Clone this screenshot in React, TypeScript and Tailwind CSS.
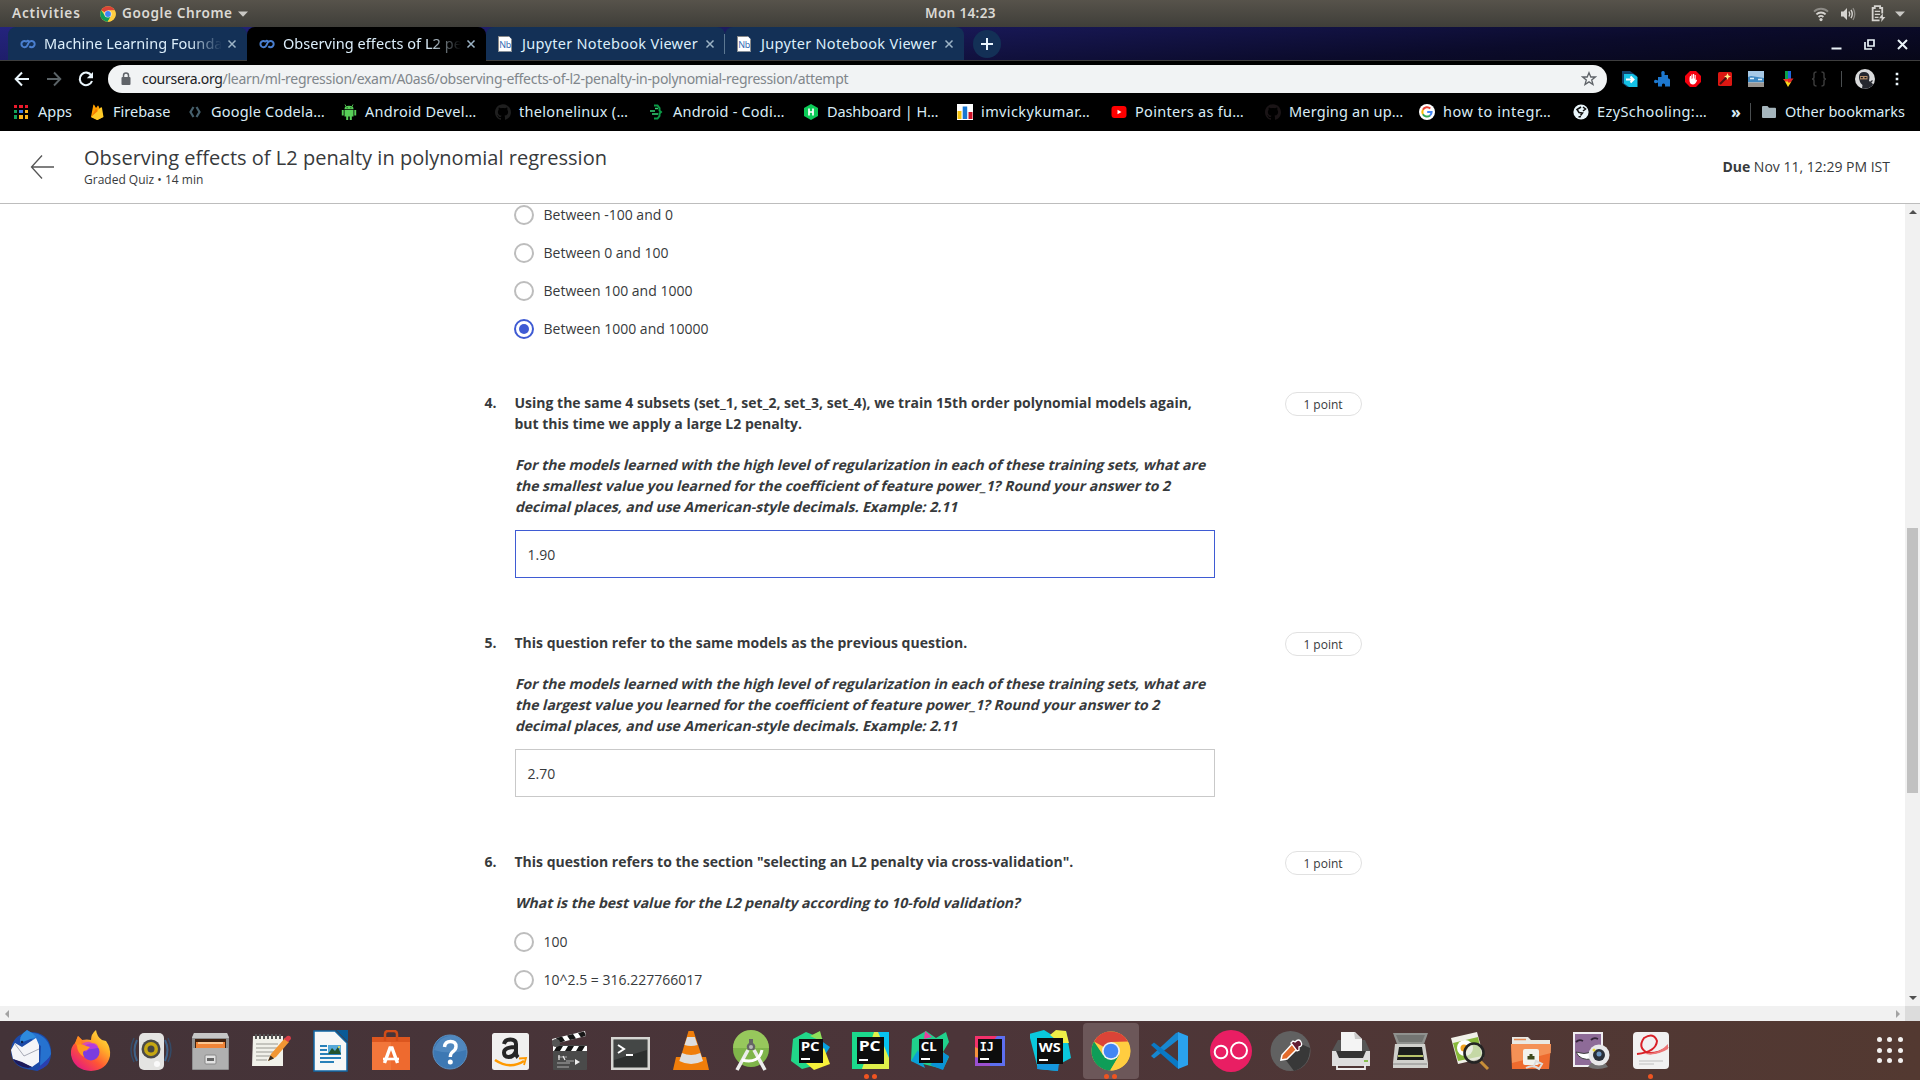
import React, { type ReactNode } from "react";
import { SiGithub } from "react-icons/si";

const Svg = ({ s = 16, vb = "0 0 16 16", children, className = "" }: { s?: number; vb?: string; children: ReactNode; className?: string }) => (
  <svg width={s} height={s} viewBox={vb} className={"shrink-0 " + className} fill="none">
    {children}
  </svg>
);

function ChromeLogo({ s = 16 }: { s?: number }) {
  return (
    <Svg s={s} vb="0 0 40 40">
      <circle cx="20" cy="20" r="19.5" fill="#ffcd40" />
      <path d="M20 20L3 10.4A19.5 19.5 0 0 1 37 10.5L20 11Z" fill="#db4437" />
      <path d="M3 10.4A19.5 19.5 0 0 0 19 39.5L28 24.5L20 20L12 24Z" fill="#0f9d58" />
      <path d="M37 11H20L28 24.5L19.5 39.5A19.5 19.5 0 0 0 37 11Z" fill="#ffcd40" />
      <circle cx="20" cy="20" r="9" fill="#f1f1f1" />
      <circle cx="20" cy="20" r="7.3" fill="#4285f4" />
    </Svg>
  );
}

const Caret = () => (
  <Svg s={10} vb="0 0 10 10"><path d="M0 2.5H10L5 7.8Z" fill="#c9c8c4" /></Svg>
);

function TopBar() {
  return (
    <div className="relative flex h-[27px] items-center bg-gradient-to-b from-[#57534b] to-[#3f3e39] text-[13.6px] font-semibold text-[#dbd9d4]">
      <span className="ml-[12px] w-[88px] tracking-[0.8px]">Activities</span>
      <ChromeLogo />
      <span className="ml-[6px] w-[116px] whitespace-nowrap tracking-[0.6px]">Google Chrome</span>
      <Caret />
      <span className="absolute left-[925px] w-[76px] whitespace-nowrap tracking-[0.3px]">Mon 14:23</span>
      <div className="mr-[15px] ml-auto flex items-center">
        <Svg s={16}>
          <path d="M1 5.6A10 10 0 0 1 15 5.6" stroke="#8d8b86" strokeWidth="1.8" />
          <path d="M3.4 8.4A6.5 6.5 0 0 1 12.6 8.4M5.6 11A3.5 3.5 0 0 1 10.4 11" stroke="#d5d3cf" strokeWidth="1.8" />
          <circle cx="8" cy="13.6" r="1.6" fill="#d5d3cf" />
        </Svg>
        <Svg s={16} className="ml-[11px]">
          <path d="M1 5.5H3.5L7 2V14L3.5 10.5H1Z" fill="#d5d3cf" />
          <path d="M9 5.5Q10.5 8 9 10.5M11 3.8Q13.5 8 11 12.2" stroke="#d5d3cf" strokeWidth="1.4" />
          <path d="M13 2.2Q16.5 8 13 13.8" stroke="#8d8b86" strokeWidth="1.3" />
        </Svg>
        <Svg s={17} className="ml-[14px]">
          <path d="M9 14.5H2.5V2.8H4.5V1H9.5V2.8H11.5V8" stroke="#d5d3cf" strokeWidth="1.7" />
          <path d="M4.5 6H9.5M4.5 8.8H9.5M4.5 11.6H8" stroke="#d5d3cf" strokeWidth="1.3" />
          <path d="M12 8L8.5 12.5H11L10.5 16L14.5 11.3H12.2Z" fill="#d5d3cf" />
        </Svg>
        <span className="ml-[8px] flex"><Caret /></span>
      </div>
    </div>
  );
}

const CourseraIcon = () => (
  <Svg s={16}>
    <path d="M6.9 6.1A3.1 3.1 0 1 0 6.9 10.1C7.8 9.2 8.2 7 9.2 6.1A3.1 3.1 0 1 1 9.3 10.2M8.9 5.2C8.2 4.6 7.4 4.6 6.8 5.2" stroke="#4a7fd0" strokeWidth="2" />
  </Svg>
);

const NbIcon = () => (
  <div className="flex h-[16px] w-[14px] shrink-0 items-center justify-center overflow-hidden border border-[#8a8a8a] bg-white [clip-path:polygon(0_0,72%_0,100%_25%,100%_100%,0_100%)]">
    <span className="pt-[2px] text-[9px] leading-none tracking-[-0.5px] text-[#3b6fb6]">Nb</span>
  </div>
);

const CloseX = () => (
  <Svg s={10} vb="0 0 10 10"><path d="M1.5 1.5L8.5 8.5M8.5 1.5L1.5 8.5" stroke="#9db4c6" strokeWidth="1.5" /></Svg>
);

function Tab({ icon, title, active, fade }: { icon: ReactNode; title: string; active?: boolean; fade?: boolean }) {
  return (
    <div className={"flex w-[239px] shrink-0 items-center rounded-t-[8px] pl-[12px] text-[14.5px] text-[#dceefa] " + (active ? "h-[34px] bg-black pb-px" : "h-[33px] bg-[#133056]")}>
      <span className="flex w-[24px] shrink-0">{icon}</span>
      <span className={"w-[180px] whitespace-nowrap " + (fade ? "tracking-[0.05px] [mask-image:linear-gradient(to_right,#000_145px,transparent_178px)]" : "tracking-[0.3px]")}>{title}</span>
      <span className="ml-[3px]"><CloseX /></span>
    </div>
  );
}

function TabStrip() {
  return (
    <div className="flex h-[34px] items-start border-b border-[#3e3e3e] bg-[linear-gradient(176deg,#24247e_0%,#1a1a5c_35%,#0b0b2b_75%,#070718_100%)]">
      <div className="ml-[8px] flex">
        <Tab icon={<CourseraIcon />} title="Machine Learning Founda" fade />
        <Tab icon={<CourseraIcon />} title="Observing effects of L2 pe" active fade />
        <Tab icon={<NbIcon />} title="Jupyter Notebook Viewer" />
        <div className="-ml-[2px] flex border-l border-transparent">
          <span className="mt-[7px] h-[20px] w-px bg-[#5d7892]" />
          <Tab icon={<NbIcon />} title="Jupyter Notebook Viewer" />
        </div>
      </div>
      <div className="mt-[3px] ml-[9px] flex size-[28px] items-center justify-center rounded-full bg-[#133056]">
        <Svg s={14} vb="0 0 14 14"><path d="M7 1V13M1 7H13" stroke="#eaf6ff" strokeWidth="2" /></Svg>
      </div>
      <div className="mt-[12px] mr-[12px] ml-auto flex items-center gap-[22px]">
        <Svg s={11} vb="0 0 11 11"><path d="M.5 9.5H10.5" stroke="#eaf3f8" strokeWidth="2" /></Svg>
        <Svg s={11} vb="0 0 11 11"><path d="M4 1H10V7H4ZM1 3V10H8" stroke="#eaf3f8" strokeWidth="1.7" /></Svg>
        <Svg s={11} vb="0 0 11 11"><path d="M1 1L10 10M10 1L1 10" stroke="#eaf3f8" strokeWidth="2" /></Svg>
      </div>
    </div>
  );
}

const Ninja = () => (
  <Svg s={20} vb="0 0 20 20">
    <circle cx="10" cy="10" r="10" fill="#d9dadb" />
    <path d="M4 8Q4 3 9 3Q14 3 14.5 8L14 12Q18 14 18 16Q14 20.5 7 19.5L7.500 16Q4 13 4 8Z" fill="#25272e" />
    <rect x="5" y="7" width="7.5" height="3.4" fill="#b58d68" />
    <path d="M5.8 8.7H7.8M9.500 8.7H11.5" stroke="#111" strokeWidth="1.2" />
    <path d="M12.500 16L17.500 11.500" stroke="#25272e" strokeWidth="1.2" />
  </Svg>
);

function Toolbar() {
  return (
    <div className="flex h-[35px] items-center bg-black">
      <div className="ml-[14px] flex w-[94px] items-center gap-[16px]">
        <Svg s={16}><path d="M15 8H2M8 1.5L1.7 8L8 14.5" stroke="#eaf5fb" strokeWidth="2" /></Svg>
        <Svg s={16}><path d="M1 8H14M8 1.5L14.3 8L8 14.5" stroke="#5b6367" strokeWidth="1.9" /></Svg>
        <Svg s={16}><path d="M13.4 4.5A6.3 6.3 0 1 0 14 10" stroke="#eaf5fb" strokeWidth="2.1" /><path d="M15 1V7.2H8.8Z" fill="#eaf5fb" /></Svg>
      </div>
      <div className="flex h-[28px] w-[1499px] items-center rounded-full bg-[#f1f3f4]">
        <Svg s={14} className="ml-[11px]" vb="0 0 14 14"><rect x="2.5" y="5" width="9" height="8" rx="1" fill="#5f6368" /><path d="M4.5 6V3.5A2.5 2.5 0 0 1 9.5 3.500V6" stroke="#5f6368" strokeWidth="1.5" /></Svg>
        <span className="ml-[9px] text-[14px] tracking-[-0.29px] whitespace-nowrap text-[#80868b]"><span className="text-[#202124]">coursera.org</span>/learn/ml-regression/exam/A0as6/observing-effects-of-l2-penalty-in-polynomial-regression/attempt</span>
        <Svg s={16} className="mr-[10px] ml-auto"><path d="M8 1.7L9.8 6H14.3L10.7 8.9L12 13.6L8 10.9L4 13.6L5.3 8.9L1.7 6H6.2Z" stroke="#5f6368" strokeWidth="1.3" /></Svg>
      </div>
      <div className="ml-[15px] flex items-center gap-[15.5px]">
        <Svg><path d="M0 0H8L15 5V16H5L0 12Z" fill="#13426b" /><path d="M2 3H11L15.5 6V16H7L2 12.5Z" fill="#14c1e6" /><path d="M4 8.5H11M8.5 5.5L11.5 8.5L8.5 11.5" stroke="#fff" strokeWidth="2" /></Svg>
        <Svg><path d="M7.500 4Q6.500 0 9 0T10.500 4H14V7.500Q16 7 16 9V15.500H11Q11.500 12.500 9.500 12.500T8 15.500H4V11.500Q0 13.500 0 10.500T4 9.500V6H7.500Z" fill="#1d78cf" /></Svg>
        <Svg><path d="M5 0H11L16 5V11L11 16H5L0 11V5Z" fill="#f4000e" /><path d="M4.5 7V10Q5 13.5 8 13.5Q10.5 13.5 12 9.5L11.500 8.5L10.7 9.5V4H9.700V7.5H9.200V3H8V7.5H7.5V3.5H6.300V8H6V5H5Z" fill="#fff" /></Svg>
        <Svg><rect x="1" y="1" width="14" height="14" rx="1.5" fill="#dc1712" /><path d="M3 13L9.5 6.5" stroke="#481010" strokeWidth="2" /><path d="M10.5 2L11.5 4.5L14 5.5L11.5 6.5L10.5 9L9.5 6.5L7 5.5L9.5 4.5Z" fill="#ffec8b" /></Svg>
        <Svg><path d="M0 0H16V16H0Z" fill="#a7c9e6" /><path d="M0 6L3 5L16 7V11H0Z" fill="#3f88c2" /><path d="M0 11.5H16V16H0Z" fill="#9a9590" /><path d="M2 7.5H6M10 8.5H14" stroke="#e3f1fa" strokeWidth="1.5" /></Svg>
        <Svg><path d="M5 0H8V8H5Z" fill="#0aa14b" /><path d="M8 0H11V8H8Z" fill="#2067df" /><path d="M3 8H8V11L5.500 11Z" fill="#f03a2a" /><path d="M5 10.500L8 16L11.500 10.500Z" fill="#f9d71c" /><path d="M8 7.500H13.500L10.5 11.500H8Z" fill="#e12828" /></Svg>
        <Svg><path d="M5.5 1Q3 1 3 3V6Q3 8 1 8Q3 8 3 10V13Q3 15 5.5 15M10.5 1Q13 1 13 3V6Q13 8 15 8Q13 8 13 10V13Q13 15 10.5 15" stroke="#3a3a3a" strokeWidth="1.5" /></Svg>
      </div>
      <span className="mr-[13px] ml-[14px] h-[16px] w-px bg-[#4a4e50]" />
      <Ninja />
      <Svg className="ml-[14px]"><path d="M8 1.7V4.3M8 6.7V9.3M8 11.7V14.3" stroke="#eaf5fb" strokeWidth="2.6" /></Svg>
    </div>
  );
}

const AppsIcon = () => (
  <div className="grid size-[14px] grid-cols-3 gap-[2px]">
    <i className="bg-[#ea1a2c]" /><i className="bg-[#ea1a2c]" /><i className="bg-[#ea1a2c]" />
    <i className="bg-[#13a35a]" /><i className="bg-[#3b79e8]" /><i className="bg-[#f8b51a]" />
    <i className="bg-[#13a35a]" /><i className="bg-[#f8b51a]" /><i className="bg-[#f8b51a]" />
  </div>
);
const FirebaseIcon = () => (
  <Svg><path d="M2 13L4.3 1Q4.7 0 5.3 1L7 4L8.5 2Q9 1 9.5 2L14 13L8 16Z" fill="#ffa000" /><path d="M2 13L9.5 5.5Q13 2 13 4L14.5 13L8.5 16Z" fill="#ffca28" /><path d="M2 13L7 4.5L8.8 7Z" fill="#f57c00" /></Svg>
);
const CodeIcon = () => (
  <Svg><path d="M6.500 3L3.500 8L6.5 13M9.5 3L12.500 8L9.5 13" stroke="#46606d" strokeWidth="2.2" /></Svg>
);
const AndroidIcon = () => (
  <Svg>
    <path d="M3.5 5Q3.5 1.700 8 1.700T12.5 5Z" fill="#58d058" />
    <path d="M5 2.500L4 .5M11 2.500L12 .5" stroke="#58d058" strokeWidth=".9" />
    <path d="M3.5 5.700H12.5V12.500H10.800V16H8.800V12.500H7.200V16H5.200V12.500H3.500ZM.8 6H2.700V11.500H.8ZM13.300 6H15.200V11.500H13.300Z" fill="#58d058" />
    <path d="M5.700 3.300H6.600V4.200H5.700ZM9.400 3.300H10.300V4.200H9.400Z" fill="#0c2d0c" />
  </Svg>
);
const BlocksIcon = () => (
  <Svg><path d="M5 1.500H8.500L10.500 4V6.500L12 8L10.500 9.500V12L8.500 14.500H5" stroke="#0b9c47" strokeWidth="2" /><path d="M6 4.500H9M1 7H6M3 10H9" stroke="#33d374" strokeWidth="1.6" /></Svg>
);
const HackerIcon = () => (
  <Svg><path d="M8 0L15 4V12L8 16L1 12V4Z" fill="#0ccb57" /><path d="M6 4.500V11.500M10 4.500V11.500M6 8H10" stroke="#fff" strokeWidth="1.7" /></Svg>
);
const BarsIcon = () => (
  <Svg><path d="M0 0H16V16H0Z" fill="#fff" /><path d="M.5 7H4.5V15H.5Z" fill="#f4c20d" /><path d="M5.7 2.5H10.2V15H5.7Z" fill="#1976d2" /><path d="M11.5 8H15.5V15H11.5Z" fill="#d01228" /></Svg>
);
const YtIcon = () => (
  <Svg><rect x=".5" y="2" width="15" height="12" rx="3" fill="#f00" /><path d="M6.5 5.7L10.5 8L6.5 10.3Z" fill="#fff" /></Svg>
);
const GIcon = () => (
  <Svg><circle cx="8" cy="8" r="8" fill="#fff" /><g strokeWidth="2"><path d="M11.3 4.5A4.7 4.7 0 0 0 3.9 5.8" stroke="#ea4335" /><path d="M3.9 5.8A4.7 4.7 0 0 0 3.9 10.2" stroke="#fbbc05" /><path d="M3.9 10.2A4.7 4.7 0 0 0 11 11.5" stroke="#34a853" /><path d="M11 11.5Q12.6 10.2 12.6 8H8.2" stroke="#4285f4" /></g></Svg>
);
const GlobeIcon = () => (
  <Svg><circle cx="8" cy="8" r="7.6" fill="#eaf6fb" /><path d="M8 3L4 5.500L6 8.5L9.500 9L7.500 11.500M10 3L12.500 5L10 7M5.500 13L8 12.500" stroke="#101010" strokeWidth="1.5" /></Svg>
);
const FolderIcon = () => (
  <Svg><path d="M1 3Q1 2 2 2H6.5L8 3.7H14Q15 3.7 15 4.7V13Q15 14 14 14H2Q1 14 1 13Z" fill="#a5b5bc" /></Svg>
);

const bookmarks: { icon: ReactNode; label: string; w: string; t: string }[] = [
  { icon: <AppsIcon />, label: "Apps", w: "w-[75px]", t: "tracking-normal" },
  { icon: <FirebaseIcon />, label: "Firebase", w: "w-[98px]", t: "tracking-normal" },
  { icon: <CodeIcon />, label: "Google Codela…", w: "w-[154px]", t: "tracking-[0.2px]" },
  { icon: <AndroidIcon />, label: "Android Devel…", w: "w-[154px]", t: "tracking-[0.3px]" },
  { icon: <SiGithub className="size-[16px] text-[#1f1f1f]" />, label: "thelonelinux (…", w: "w-[154px]", t: "tracking-[0.3px]" },
  { icon: <BlocksIcon />, label: "Android - Codi…", w: "w-[154px]", t: "tracking-[0.2px]" },
  { icon: <HackerIcon />, label: "Dashboard | H…", w: "w-[154px]", t: "tracking-[-0.1px]" },
  { icon: <BarsIcon />, label: "imvickykumar…", w: "w-[154px]", t: "tracking-[0.4px]" },
  { icon: <YtIcon />, label: "Pointers as fu…", w: "w-[154px]", t: "tracking-[0.3px]" },
  { icon: <SiGithub className="size-[16px] text-[#1a1416]" />, label: "Merging an up…", w: "w-[154px]", t: "tracking-[0.2px]" },
  { icon: <GIcon />, label: "how to integr…", w: "w-[154px]", t: "tracking-[0.55px]" },
  { icon: <GlobeIcon />, label: "EzySchooling:…", w: "w-[154px]", t: "tracking-[0.4px]" },
];

function Bookmarks() {
  return (
    <div className="flex h-[35px] items-center bg-black pb-[4px] pl-[14px] text-[14.5px] text-[#d9ecf6]">
      {bookmarks.map((b, i) => (
        <div key={i} className={"flex shrink-0 items-center " + b.w}>
          <span className="flex w-[24px] shrink-0">{b.icon}</span>
          <span className={"whitespace-nowrap " + b.t}>{b.label}</span>
        </div>
      ))}
      <span className="ml-[4px] w-[19px] text-[16px] font-bold">»</span>
      <span className="mr-[10px] h-[18px] w-px bg-[#4a4e50]" />
      <FolderIcon />
      <span className="ml-[8px] whitespace-nowrap">Other bookmarks</span>
    </div>
  );
}

function PageHeader() {
  return (
    <header className="flex h-[73px] items-center border-b border-[#bdbdbd] bg-white text-[#373a3c]">
      <Svg s={24} vb="0 0 24 24" className="ml-[30px]"><path d="M24 12H1.5M12 .5L1.5 12L12 23.5" stroke="#555" strokeWidth="1.3" /></Svg>
      <div className="ml-[30px]">
        <h1 className="text-[20px] leading-[26px] tracking-[0.02px] whitespace-nowrap">Observing effects of L2 penalty in polynomial regression</h1>
        <p className="text-[12px] leading-[18px]">Graded Quiz • 14 min</p>
      </div>
      <p className="mr-[30px] ml-auto pb-[2px] text-[14px]"><b>Due</b> Nov 11, 12:29 PM IST</p>
    </header>
  );
}

function Radio({ label, on }: { label: string; on?: boolean }) {
  return (
    <label className="flex h-[38px] items-center text-[14px]">
      <span className={"mr-[9.5px] flex size-[20px] items-center justify-center rounded-full border-2 " + (on ? "border-[#3f5bd3]" : "border-[#bdbdbd]")}>
        {on && <span className="size-[10px] rounded-full bg-[#3f5bd3]" />}
      </span>
      <span className="pb-[2px]">{label}</span>
    </label>
  );
}

function Question({ n, title, body, children, className = "" }: { n: number; title: string[]; body: string[]; children: ReactNode; className?: string }) {
  return (
    <section className={"flex items-start text-[14px] leading-[21px] " + className}>
      <b className="-mt-px w-[30px] shrink-0 pl-[0.5px]">{n}.</b>
      <div className="-mt-px w-[771px] shrink-0 pl-[0.5px] whitespace-nowrap">
        {title.map((l) => <p key={l} className="font-bold">{l}</p>)}
        <div className="mt-[20px] mb-[13px] font-bold">
          {body.map((l) => <p key={l} className="w-fit origin-[0_75%] -skew-x-[14deg]">{l}</p>)}
        </div>
        {children}
      </div>
      <span className="-mt-px flex h-[24px] w-[77px] items-center justify-center rounded-full border border-[#e1e1e1] pr-px text-[12px]">1 point</span>
    </section>
  );
}

const Field = ({ v, on }: { v: string; on?: boolean }) => (
  <div className={"flex h-[48px] w-[700px] items-center border pl-[12px] text-[14px] " + (on ? "border-[#3f5bd3]" : "border-[#c9c9c9]")}>{v}</div>
);

function Quiz() {
  return (
    <main className="h-[802px] w-[1905px] overflow-hidden bg-white pl-[484px] text-[#373a3c]">
      <div className="-mt-[8px] pl-[30px]">
        <Radio label="Between -100 and 0" />
        <Radio label="Between 0 and 100" />
        <Radio label="Between 100 and 1000" />
        <Radio label="Between 1000 and 10000" on />
      </div>
      <Question n={4} className="mt-[45px]"
        title={["Using the same 4 subsets (set_1, set_2, set_3, set_4), we train 15th order polynomial models again,", "but this time we apply a large L2 penalty."]}
        body={["For the models learned with the high level of regularization in each of these training sets, what are", "the smallest value you learned for the coefficient of feature power_1? Round your answer to 2", "decimal places, and use American-style decimals. Example: 2.11"]}>
        <Field v="1.90" on />
      </Question>
      <Question n={5} className="mt-[55px]"
        title={["This question refer to the same models as the previous question."]}
        body={["For the models learned with the high level of regularization in each of these training sets, what are", "the largest value you learned for the coefficient of feature power_1? Round your answer to 2", "decimal places, and use American-style decimals. Example: 2.11"]}>
        <Field v="2.70" />
      </Question>
      <Question n={6} className="mt-[55px]"
        title={['This question refers to the section "selecting an L2 penalty via cross-validation".']}
        body={["What is the best value for the L2 penalty according to 10-fold validation?"]}>
        <div className="-mt-[3px] -ml-[0.5px]">
          <Radio label="100" />
          <Radio label="10^2.5 = 316.227766017" />
        </div>
      </Question>
    </main>
  );
}

/* Dock icons share a 42x42 canvas. */
const D = ({ children }: { children: ReactNode }) => <Svg s={42} vb="0 0 42 42">{children}</Svg>;

const Thunderbird = () => (
  <D>
    <path d="M1 22Q1 8 14 3L17 0L20 2Q38 2 41 19Q42 34 33 38L27 41L22 40Q2 38 1 22Z" fill="#1b4aa8" />
    <path d="M10 8Q16 0 28 4Q40 9 41 24Q37 32 30 36L31 16L20 8Z" fill="#2672cf" />
    <path d="M17 0Q9 5 10 13L18 10L26 7Q22 2 17 0Z" fill="#2e8bdc" />
    <circle cx="12" cy="12" r="1.3" fill="#0d2350" />
    <path d="M5 13L12 17L26 8L29 15L29 32L22 37L3 29L1 20Z" fill="#f4f5f8" />
    <path d="M5 14L14 26L29 19" stroke="#a6a9b5" strokeWidth="1" />
    <path d="M3 29L12 32L22 37L18 38Q7 37 3 29Z" fill="#1d1a5a" />
    <path d="M30 36L40 27L38 34L33 38L27 41Z" fill="#2b3fae" />
  </D>
);
const Firefox = () => (
  <D><defs><linearGradient id="ffg" x1="1" y1="0" x2=".2" y2="1"><stop offset="0" stopColor="#fff44f" /><stop offset=".35" stopColor="#ffb129" /><stop offset=".65" stopColor="#ff5634" /><stop offset="1" stopColor="#e31587" /></linearGradient></defs>
    <path d="M6 12Q7 8 8 6L12 10Q17 9 21 10Q21 4 26 0Q27 7 32 10L36 11Q41 18 40 26Q37 40 21 41Q4 40 1 25Q0 17 6 12Z" fill="url(#ffg)" />
    <path d="M5 13L8 6L12 10L10 20Z" fill="#ff8a1e" />
    <circle cx="21" cy="22" r="8.5" fill="#7a3ce0" />
    <path d="M12 14Q18 10 22 13Q28 13 28 18L22 19Q18 19 16 22Q13 20 12 14Z" fill="#c93ae0" opacity=".7" />
    <path d="M7 15Q12 13 16 16L20 17Q18 20 14 21Q12 22 14 27Q7 23 7 15Z" fill="#ff9a1f" /></D>
);
const Speaker = () => (
  <D><path d="M4 8Q-2 20 4 32M38 8Q44 20 38 32" stroke="#344a66" strokeWidth="1.5" /><path d="M7 10Q2 20 7 31M35 10Q40 20 35 31" stroke="#3f6288" strokeWidth="2" /><rect x="9" y="3" width="25" height="37" rx="5" fill="#e4e4e2" /><circle cx="21" cy="19" r="9.5" fill="#4a4a48" /><circle cx="21" cy="19" r="7" fill="#c5a712" /><circle cx="21" cy="19" r="3.5" fill="#444" /><circle cx="27" cy="34" r="3" fill="#fafafa" /></D>
);
const Files = () => (
  <D><path d="M4 3H37L39 7V39Q39 40 38 40H3Q2 40 2 39V7Z" fill="#8f8f8f" /><path d="M4 3H37L39 8H2Z" fill="#c7c7c7" /><rect x="5" y="9" width="31" height="9" fill="#42210e" /><path d="M6 12H35V18H6Z" fill="#f08437" /><path d="M8 13H33" stroke="#ffdcb0" strokeWidth="1.5" /><path d="M3 18H38V39H3Z" fill="#b0b0b0" /><rect x="15" y="25" width="11" height="9" rx="1" fill="#e3e3e3" stroke="#888" /><path d="M17 28H24V31H17Z" fill="#666" /></D>
);
const Notes = () => (
  <D><path d="M3 6H33V36H2Z" fill="#f1f1ea" /><path d="M6 9V4M10 9V4M14 9V4M18 9V4M22 9V4M26 9V4M30 9V4" stroke="#555" strokeWidth="2" /><path d="M6 14H28M6 18H27M6 22H24M6 26H20M6 30H17" stroke="#b7b7b0" strokeWidth="1.3" /><path d="M18 31L21 24L35 8L39 12L26 27Z" fill="#f19633" /><path d="M34 9L37 6Q41 5 41 9L38 12Z" fill="#d93d48" /><path d="M18 31L20.5 25.5L24 28.5Z" fill="#3a2d20" /></D>
);
const Writer = () => (
  <D><path d="M4 1H25L37 13V41H4Z" fill="#f7f7f7" stroke="#1067a5" strokeWidth="1.5" /><path d="M26 0H38V12Z" fill="#0a5a96" /><path d="M10 16H17M10 20H17M10 24H31M10 28H31M10 32H24" stroke="#2980b9" strokeWidth="2" /><path d="M18 15H31V24H18Z" fill="#55a8d8" /><path d="M18 24L22 18L25 21L28 17L31 24Z" fill="#24532d" /><circle cx="29" cy="17" r="1" fill="#f5e04a" /></D>
);
const Software = () => (
  <D><path d="M2 7H40V40H2Z" fill="#ee6a2f" /><path d="M2 7H40V12H2Z" fill="#dc561f" /><path d="M2 12H21V40H2Z" fill="#f58248" opacity=".5" /><path d="M15 11V4Q15 1 18 1H24Q27 1 27 4V11" stroke="#d24d18" strokeWidth="2.5" /><path d="M14.500 33L20 18H22L27.500 33" stroke="#fff" strokeWidth="3.4" /><path d="M13 29H29" stroke="#fff" strokeWidth="2.6" /></D>
);
const Help = () => (
  <D><circle cx="20" cy="22" r="17" fill="#3d78b3" stroke="#5b8fc0" /><path d="M4 20Q10 4 25 6Q36 11 36 20Q20 25 4 20Z" fill="#5d93c6" opacity=".6" /><path d="M14.5 17Q15 11.5 20.5 11.5Q26 11.5 26 16.5Q26 19.5 22.5 22Q20.3 23.7 20.3 27" stroke="#fff" strokeWidth="3.4" /><circle cx="20.3" cy="32" r="2.5" fill="#fff" /></D>
);
const Amazon = () => (
  <D><rect x="2" y="3" width="37" height="37" rx="2.5" fill="#f0f0f0" /><path d="M14 14Q15 9.5 20.5 9.5Q26 9.5 26 14V23Q26 25.5 28 27.5M26 17Q14 17 14 22.5Q14 27 18.5 27Q24 27 26 21" stroke="#262626" strokeWidth="4" /><path d="M5 30Q20 40 34 31" stroke="#ff9900" strokeWidth="2.6" /><path d="M29 28.5L36 28L34 35" stroke="#ff9900" strokeWidth="1.8" /></D>
);
const Clapper = () => (
  <D><path d="M3 15H37V39Q37 40 36 40H4Q3 40 3 39Z" fill="#4a4a4a" /><path d="M3 16H37V21H3Z" fill="#fff" /><path d="M7 16H13L10 21H4ZM18 16H24L21 21H15ZM29 16H35L32 21H26Z" fill="#161616" /><path d="M2 9L35 1L36 6L4 14Z" fill="#fff" /><path d="M6 8L12 6.5L15 11L9 13ZM17 5.5L23 4L26 8.5L20 10ZM28 3L34 1.5L36 5.5L31 7.5Z" fill="#161616" /><circle cx="6" cy="13" r="4" fill="#555" /><path d="M8 27H17M16 31H24M7 33H20M7 37H19" stroke="#aaa" strokeWidth="1.2" /><path d="M9 25V30M13 26L15 30" stroke="#eee" strokeWidth="1.2" /><path d="M25 29L30 32L25 35Z" fill="#eee" /></D>
);
const Terminal = () => (
  <D><rect x="1" y="7" width="39" height="33" fill="#d6d6d3" /><rect x="3.5" y="9.5" width="34" height="28" fill="#2d302f" /><path d="M4 10H37V20L4 30Z" fill="#444746" /><path d="M8 15L14 19L8 23M16 25H23" stroke="#fff" strokeWidth="2" /></D>
);
const Vlc = () => (
  <D><path d="M6 27H36L39 40H3Z" fill="#f07e0a" /><path d="M18.5 1H23.5L34 33Q21 38 9 33Z" fill="#f07e0a" /><path d="M17.200 7H24.800L27.500 15Q21 17 14.500 15ZM12 23Q21 27 30.300 23L33 31Q21 37 9.3 31Z" fill="#dedede" /></D>
);
const Studio = () => (
  <D><circle cx="21" cy="19" r="18" fill="#7fb54a" /><path d="M3 18A18 18 0 0 1 39 18Z" fill="#97c85c" /><path d="M19 9H23V13Q27 16 24 20H18Q15 16 19 13Z" fill="#656565" /><path d="M18 20L7 40M24 20L35 40" stroke="#ececec" strokeWidth="3.6" /><path d="M12 30Q29 34 32 20" stroke="#fff" strokeWidth="3" /><circle cx="21" cy="17" r="2" fill="#b8b8b8" /></D>
);

function Ide({ text, bg, x = 8, y = 8, w = 25, tl }: { text: string; bg: ReactNode; x?: number; y?: number; w?: number; tl: number }) {
  return (
    <D>{bg}<rect x={x} y={y} width={w} height={w} fill="#0d0d0d" />
      <text x={x + 1.7} y={y + w * 0.52} fill="#fff" fontSize={w * 0.5} fontWeight="700" fontFamily={text === "IJ" ? "DejaVu Sans Mono" : "Open Sans"} textLength={tl} lengthAdjust="spacingAndGlyphs">{text}</text>
      <rect x={x + 2} y={y + w - 5} width="9" height="2" fill="#fff" /></D>
  );
}
const pcA = <><path d="M3 9L16 2L33 9L30 34L12 39L1 31Z" fill="#21d789" /><path d="M20 6L30 1L33 12Z" fill="#8de05a" /><path d="M30 10L40 17L35 25Z" fill="#07a0e0" /><path d="M34 18L40 34L24 40L16 33Z" fill="#f7f13b" /></>;
const pcB = <><path d="M2 2H39V39H2Z" fill="#1bd98c" /><path d="M27 2H39V39H30Z" fill="#07c3f2" /><path d="M24 2H28L34 16L39 28V39H12Z" fill="#dff04a" /></>;
const clBg = <><path d="M2 9L16 1L26 8L36 2L39 12L33 22L39 27L33 39L1 31Z" fill="#20d18c" /><path d="M15 1L22 7L14 9Z" fill="#e83e9e" /><path d="M32 22L39 26L33 40L20 35Z" fill="#0a93d6" /><path d="M1 31L8 20L15 38Z" fill="#0a9fd6" /></>;
const ijBg = <><path d="M5 6H35V36H5Z" fill="#5e6ff0" /><path d="M5 6H27L20 15L10 25L5 22Z" fill="#f4316b" /><path d="M5 17L11 20L12 30L5 36Z" fill="#f7933c" /><path d="M5 27L20 30V36H5Z" fill="#9a50d0" /></>;
const wsBg = <><path d="M-1 4L14 0L22 5L36 1L41 28L28 35L28 41L8 39Z" fill="#0ac8dd" /><path d="M20 5L26 0L36 1L39 13L30 13Z" fill="#f0f048" /><path d="M8 33H29L28 41L7 39Z" fill="#1596dd" /></>;

const VsCode = () => (
  <D><path d="M1 26L4 28.500L29 9V2L26 3L1 26Z" fill="#1787d0" /><path d="M1 15L4 12.500L29 32V39L27 38L1 15Z" fill="#0a79c4" /><path d="M28 2L38 6V35L28 39Z" fill="#2aa2ee" /></D>
);
const Circles = () => (
  <D><circle cx="21" cy="21" r="21" fill="#e91e63" /><circle cx="11" cy="22" r="6.3" stroke="#fff" strokeWidth="2" /><circle cx="29" cy="20.5" r="8" stroke="#fff" strokeWidth="2" /></D>
);
const Picker = () => (
  <D><circle cx="20.5" cy="21" r="20" fill="#616161" /><path d="M31 14L40 18Q40 36 24 41L15 29Z" fill="#383838" /><path d="M11 30L12 25L23 13L28 18L17 29Z" fill="#e36b2c" stroke="#fff" strokeWidth="1.5" /><path d="M21 13L23 11L25 12Q29 8 31 12Q33 16 29 17L29 20L27 21Z" fill="#641e33" stroke="#fff" strokeWidth="1.3" /></D>
);
const Printer = () => (
  <D><path d="M8 10H35L40 21V36H2V21Z" fill="#565656" /><path d="M11 2H25L32 9V21H11Z" fill="#f4f4f4" /><path d="M24 2L25 9H32Z" fill="#c9c9c9" /><path d="M2 21H40V36H2Z" fill="#dedede" /><path d="M6 21H36L33 28H9Z" fill="#343434" /><path d="M7 35V39H35V35" stroke="#eee" strokeWidth="1.8" /><path d="M34 31H38" stroke="#88bf50" strokeWidth="2" /></D>
);
const Scanner = () => (
  <D><path d="M3 3H38L34 14H7Z" fill="#8f918e" /><path d="M6 5H35L32 12H9Z" fill="#737572" /><path d="M5 14H35L38 33V38H3V33Z" fill="#d0d0cc" /><path d="M9 17H32L34 30H7Z" fill="#1c1e1c" /><path d="M8 26H33" stroke="#b9c46b" strokeWidth="2" /><path d="M3 34H37" stroke="#888" /></D>
);
const Viewer = () => (
  <D><path d="M1 8L27 2L34 28L8 34Z" fill="#f1f1e8" /><path d="M3 13L28 7L32 26L8 31Z" fill="#88b83a" /><circle cx="15" cy="18" r="8" fill="#fff" /><circle cx="14" cy="18" r="3.5" fill="#efa220" /><path d="M29 30L38 39" stroke="#c88e38" strokeWidth="3" /><circle cx="24" cy="23" r="9.5" fill="#dfe5d3" fillOpacity=".7" stroke="#242424" strokeWidth="2.6" /></D>
);
const NetFolder = () => (
  <D><path d="M2 7H18L21 10H40V22H2Z" fill="#e9e9e4" /><path d="M4 9.5H16" stroke="#e58b55" strokeWidth="1.5" /><path d="M1 14H41L39 39H2Z" fill="#ee6b2e" /><path d="M1 14H41V23L2 33Z" fill="#f6a168" opacity=".7" /><rect x="13" y="19" width="16" height="16" rx="2" fill="#f2f2ed" /><path d="M17.500 29.500V26H19.500V24H22.500V26H24.500V29.500Z" fill="#3f4a1d" /><path d="M16 38Q23 34 30 39M26 31L32 34L29 39L24 36Z" stroke="#ddd" strokeWidth="2" /></D>
);
const Cheese = () => (
  <D><path d="M3 2H33V37H3Z" fill="#f1eff2" /><path d="M5 4H31V35H5Z" fill="#8e6b98" /><path d="M6 12Q9 9 13 11M21 10Q24 7 28 9" stroke="#332438" strokeWidth="1.8" /><path d="M6 22Q14 25 22 22V29Q10 31 6 22Z" fill="#fff" stroke="#444" /><path d="M18 37L21 33H35L38 37Q27 41 18 37Z" fill="#727272" /><circle cx="29" cy="25" r="10.5" fill="#e8e8ea" /><circle cx="29" cy="25" r="6" fill="#2a303a" /><circle cx="29" cy="24" r="2.5" fill="#6d96c1" /><circle cx="24" cy="20" r="1.500" fill="#e8d93a" /></D>
);
const PdfPen = () => (
  <D><rect x="3" y="2" width="36" height="37" rx="4" fill="#f1f1f1" /><path d="M7 24Q26 22 27 11Q24 2 14 8Q7 18 18 23Q27 24 38 17" stroke="#d92027" strokeWidth="2" /><path d="M15 24Q27 26 38 19V14Q30 23 18 23Z" fill="#ec7475" /><path d="M9 31H33M9 34H24" stroke="#cfcfcf" strokeWidth="1.5" /></D>
);

const dock: { el: ReactNode; dots?: number; active?: boolean }[] = [
  { el: <Thunderbird /> }, { el: <Firefox /> }, { el: <Speaker /> }, { el: <Files /> }, { el: <Notes /> }, { el: <Writer /> },
  { el: <Software /> }, { el: <Help /> }, { el: <Amazon /> }, { el: <Clapper /> }, { el: <Terminal /> }, { el: <Vlc /> }, { el: <Studio /> },
  { el: <Ide text="PC" bg={pcA} x={9} y={9} w={24} tl={19} /> },
  { el: <Ide text="PC" bg={pcB} x={7} y={7} w={27} tl={22} />, dots: 2 },
  { el: <Ide text="CL" bg={clBg} x={9} y={9} w={24} tl={16} /> },
  { el: <Ide text="IJ" bg={ijBg} x={8} y={9} w={24} tl={14} /> },
  { el: <Ide text="WS" bg={wsBg} x={7} y={8} w={26} tl={22} /> },
  { el: <ChromeLogo s={40} />, dots: 2, active: true },
  { el: <VsCode /> }, { el: <Circles /> }, { el: <Picker /> }, { el: <Printer /> }, { el: <Scanner /> }, { el: <Viewer /> },
  { el: <NetFolder /> }, { el: <Cheese /> }, { el: <PdfPen />, dots: 1 },
];

function Dock() {
  return (
    <div className="flex h-[59px] items-start bg-gradient-to-r from-[#433338] via-[#4c3539] to-[#533931] pt-[2px] pl-[0.5px]">
      {dock.map((d, i) => (
        <div key={i} className="flex w-[60px] shrink-0 justify-center">
          <div className={"relative flex size-[56px] items-center justify-center rounded-[4px] " + (d.active ? "bg-[#6c5759]" : "")}>
            {d.el}
            {d.dots && (
              <span className="absolute bottom-0 left-0 flex w-full justify-center gap-[3px]">
                {Array.from({ length: d.dots }, (_, k) => <i key={k} className="size-[5px] rounded-full bg-[#ee5421]" />)}
              </span>
            )}
          </div>
        </div>
      ))}
      <div className="mt-[14px] mr-[17px] ml-auto grid grid-cols-3 gap-[5.3px]">
        {Array.from({ length: 9 }, (_, k) => <i key={k} className="size-[5.3px] rounded-full bg-[#f2f0ef]" />)}
      </div>
    </div>
  );
}

function VScroll() {
  return (
    <div className="flex h-[802px] w-[15px] flex-col items-center bg-[#f1f1f1]">
      <Svg s={8} vb="0 0 8 8" className="mt-[4px]"><path d="M0 6L4 2L8 6Z" fill="#505050" /></Svg>
      <div className="mt-[312px] h-[265px] w-[11px] bg-[#c1c1c1]" />
      <Svg s={8} vb="0 0 8 8" className="mt-auto mb-[4px]"><path d="M0 2L4 6L8 2Z" fill="#505050" /></Svg>
    </div>
  );
}

export default function App() {
  return (
    <div className="h-[1080px] w-[1920px] overflow-hidden bg-white font-['Open_Sans','Noto_Sans',sans-serif]">
      <div className="font-['Noto_Sans','Open_Sans',sans-serif]">
        <TopBar />
        <TabStrip />
        <Toolbar />
        <Bookmarks />
      </div>
      <PageHeader />
      <div className="flex">
        <Quiz />
        <VScroll />
      </div>
      <div className="flex h-[15px] items-center bg-[#f1f1f1]">
        <Svg s={8} vb="0 0 8 8" className="ml-[3px]"><path d="M6 0L2 4L6 8Z" fill="#a3a3a3" /></Svg>
        <Svg s={8} vb="0 0 8 8" className="mr-[3px] ml-auto"><path d="M2 0L6 4L2 8Z" fill="#a3a3a3" /></Svg>
        <span className="h-full w-[15px] bg-[#dcdcdc]" />
      </div>
      <Dock />
    </div>
  );
}
